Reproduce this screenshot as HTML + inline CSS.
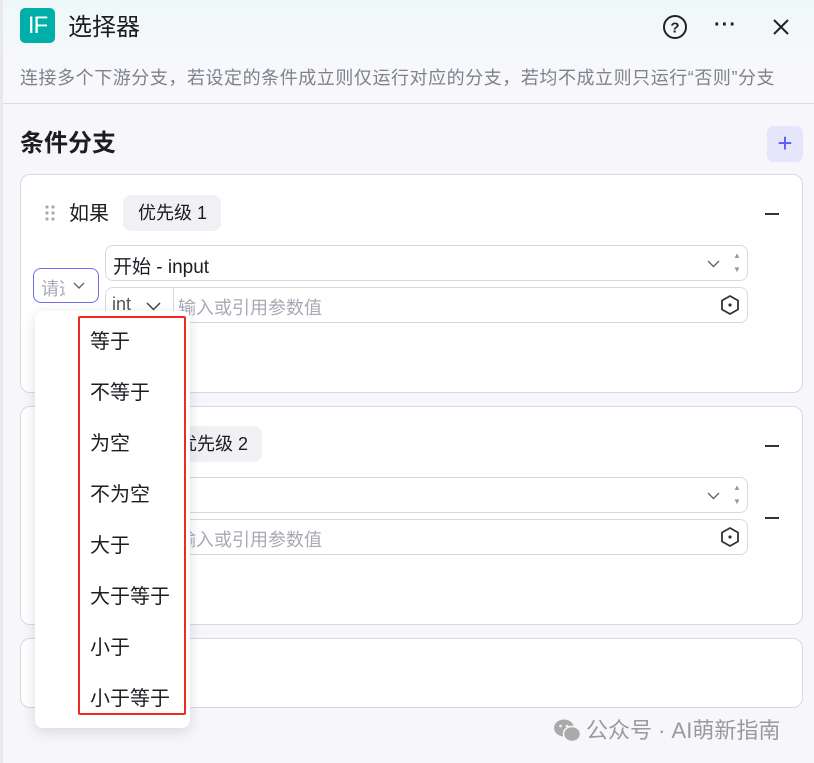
<!DOCTYPE html>
<html><head><meta charset="utf-8"><style>
*{box-sizing:border-box;margin:0;padding:0}
body{width:814px;height:763px;overflow:hidden;font-family:"Liberation Sans","Noto Sans CJK SC",sans-serif;background:#f7f7fb;position:relative;color:#1c1d23}
.a{position:absolute}
.top{left:0;top:0;width:814px;height:104px;background:linear-gradient(180deg,#eef8f8 0%,#f7f8fc 60%,#f8f8fc 100%);border-bottom:1px solid #dcdce8}
.lb{left:0;top:0;width:3px;height:763px;background:#e8e8ee}
.card{left:20px;width:783px;background:#fff;border:1px solid #d8d8e3;border-radius:10px}
.inp{left:105px;width:643px;height:36px;border:1px solid #d8d8e3;border-radius:8px;background:#fff}
.tag{height:36px;background:#f0f0f5;border-radius:8px;font-size:18px;line-height:36px;padding-left:15px;color:#1c1d23}
.minus{width:14px;height:2px;background:#333;left:765px}
.it{left:90px;font-size:20px;color:#1c1d23;line-height:24px}
.ph{color:#a8a9b4;font-size:18px}
</style></head><body>
<div class="a top"></div>
<div class="a lb"></div>
<div class="a" style="left:20px;top:8px;width:35px;height:35px;border-radius:5px;background:#00b0a8;color:#fff;font-size:24px;line-height:35px;text-align:center;font-weight:300;letter-spacing:-1px">IF</div>
<div class="a" style="left:68px;top:12px;font-size:24px;line-height:32px">选择器</div>
<svg class="a" style="left:662px;top:14px" width="26" height="26" viewBox="0 0 26 26"><circle cx="13" cy="13" r="11" fill="none" stroke="#222" stroke-width="2"/><text x="13" y="18.5" font-size="15" text-anchor="middle" font-family="Liberation Sans" font-weight="bold" fill="#222">?</text></svg>
<div class="a" style="left:714px;top:14px;font-size:20px;letter-spacing:1px;font-weight:bold">···</div>
<svg class="a" style="left:772px;top:18px" width="18" height="18"><path d="M2 2L16 16M16 2L2 16" stroke="#222" stroke-width="2"/></svg>
<div class="a" style="left:20px;top:66px;font-size:18px;color:#80818a;line-height:24px;white-space:nowrap;letter-spacing:0.55px">连接多个下游分支，若设定的条件成立则仅运行对应的分支，若均不成立则只运行“否则”分支</div>
<div class="a" style="left:20px;top:128px;font-size:24px;font-weight:bold;line-height:32px">条件分支</div>
<div class="a" style="left:767px;top:126px;width:36px;height:36px;background:#e5e5fb;border-radius:7px;color:#5a5af5;font-size:26px;line-height:34px;text-align:center">+</div>

<div class="a card" style="top:174px;height:219px"></div>
<svg class="a" style="left:44px;top:204px" width="12" height="18"><g fill="#aaa"><circle cx="3" cy="3" r="1.6"/><circle cx="9" cy="3" r="1.6"/><circle cx="3" cy="9" r="1.6"/><circle cx="9" cy="9" r="1.6"/><circle cx="3" cy="15" r="1.6"/><circle cx="9" cy="15" r="1.6"/></g></svg>
<div class="a" style="left:69px;top:200px;font-size:20px;line-height:28px">如果</div>
<div class="a tag" style="left:123px;top:195px;width:98px">优先级 1</div>
<div class="a minus" style="top:213px"></div>
<div class="a" style="left:33px;top:268px;width:66px;height:35px;border:1px solid #6e6ef0;border-radius:8px;background:#fff"><span class="ph" style="position:absolute;left:7px;top:6px;width:24px;overflow:hidden;white-space:nowrap">请选</span><svg style="position:absolute;left:39px;top:13px" width="12" height="8"><path d="M1 1L6 6L11 1" stroke="#666" stroke-width="1.4" fill="none"/></svg></div>
<div class="a inp" style="top:245px"><span style="position:absolute;left:7px;top:6px;font-size:19px">开始 - input</span><svg style="position:absolute;left:601px;top:14px" width="13" height="8"><path d="M1 1L6.5 6.5L12 1" stroke="#666" stroke-width="1.4" fill="none"/></svg><span style="position:absolute;left:627px;top:3px;font-size:8px;color:#999;line-height:14px">▲<br>▼</span></div>
<div class="a inp" style="top:287px"><span style="position:absolute;left:6px;top:6px;font-size:18px;color:#555">int</span><svg style="position:absolute;left:40px;top:14px" width="15" height="9"><path d="M1 1L7.5 7.5L14 1" stroke="#444" stroke-width="1.5" fill="none"/></svg><div style="position:absolute;left:67px;top:0;width:1px;height:34px;background:#d8d8e3"></div><span class="ph" style="position:absolute;left:72px;top:6px">输入或引用参数值</span><svg style="position:absolute;left:613px;top:6px" width="22" height="22"><path d="M11 2L19 6.5V15.5L11 20L3 15.5V6.5Z" fill="none" stroke="#333" stroke-width="1.8" stroke-linejoin="round"/><circle cx="11" cy="11" r="1.6" fill="#333"/></svg></div>

<div class="a card" style="top:406px;height:219px"></div>
<div class="a tag" style="left:164px;top:426px;width:98px">优先级 2</div>
<div class="a minus" style="top:445px"></div>
<div class="a inp" style="top:477px"><svg style="position:absolute;left:601px;top:14px" width="13" height="8"><path d="M1 1L6.5 6.5L12 1" stroke="#666" stroke-width="1.4" fill="none"/></svg><span style="position:absolute;left:627px;top:3px;font-size:8px;color:#999;line-height:14px">▲<br>▼</span></div>
<div class="a inp" style="top:519px"><span class="ph" style="position:absolute;left:72px;top:6px">输入或引用参数值</span><svg style="position:absolute;left:613px;top:6px" width="22" height="22"><path d="M11 2L19 6.5V15.5L11 20L3 15.5V6.5Z" fill="none" stroke="#333" stroke-width="1.8" stroke-linejoin="round"/><circle cx="11" cy="11" r="1.6" fill="#333"/></svg></div>
<div class="a minus" style="top:517px"></div>

<div class="a card" style="top:638px;height:70px"></div>

<div class="a" style="left:35px;top:311px;width:155px;height:417px;background:#fff;border-radius:8px;box-shadow:0 4px 14px rgba(0,0,0,0.12)"></div>
<div class="a" style="left:78px;top:316px;width:108px;height:399px;border:2px solid #ee2a24;border-radius:2px"></div>
<div class="a it" style="top:330px">等于</div>
<div class="a it" style="top:381px">不等于</div>
<div class="a it" style="top:432px">为空</div>
<div class="a it" style="top:483px">不为空</div>
<div class="a it" style="top:534px">大于</div>
<div class="a it" style="top:585px">大于等于</div>
<div class="a it" style="top:636px">小于</div>
<div class="a it" style="top:687px">小于等于</div>

<svg class="a" style="left:553px;top:718px" width="28" height="26"><ellipse cx="11" cy="10" rx="10" ry="8.5" fill="#aaa"/><ellipse cx="19" cy="16" rx="8.5" ry="7.5" fill="#aaa" stroke="#f7f7fb" stroke-width="1.5"/><circle cx="7.5" cy="8" r="1.3" fill="#f7f7fb"/><circle cx="14" cy="8" r="1.3" fill="#f7f7fb"/></svg>
<div class="a" style="left:586px;top:716px;font-size:22px;color:#9a9a9a;line-height:30px;white-space:nowrap">公众号 · AI萌新指南</div>
</body></html>
